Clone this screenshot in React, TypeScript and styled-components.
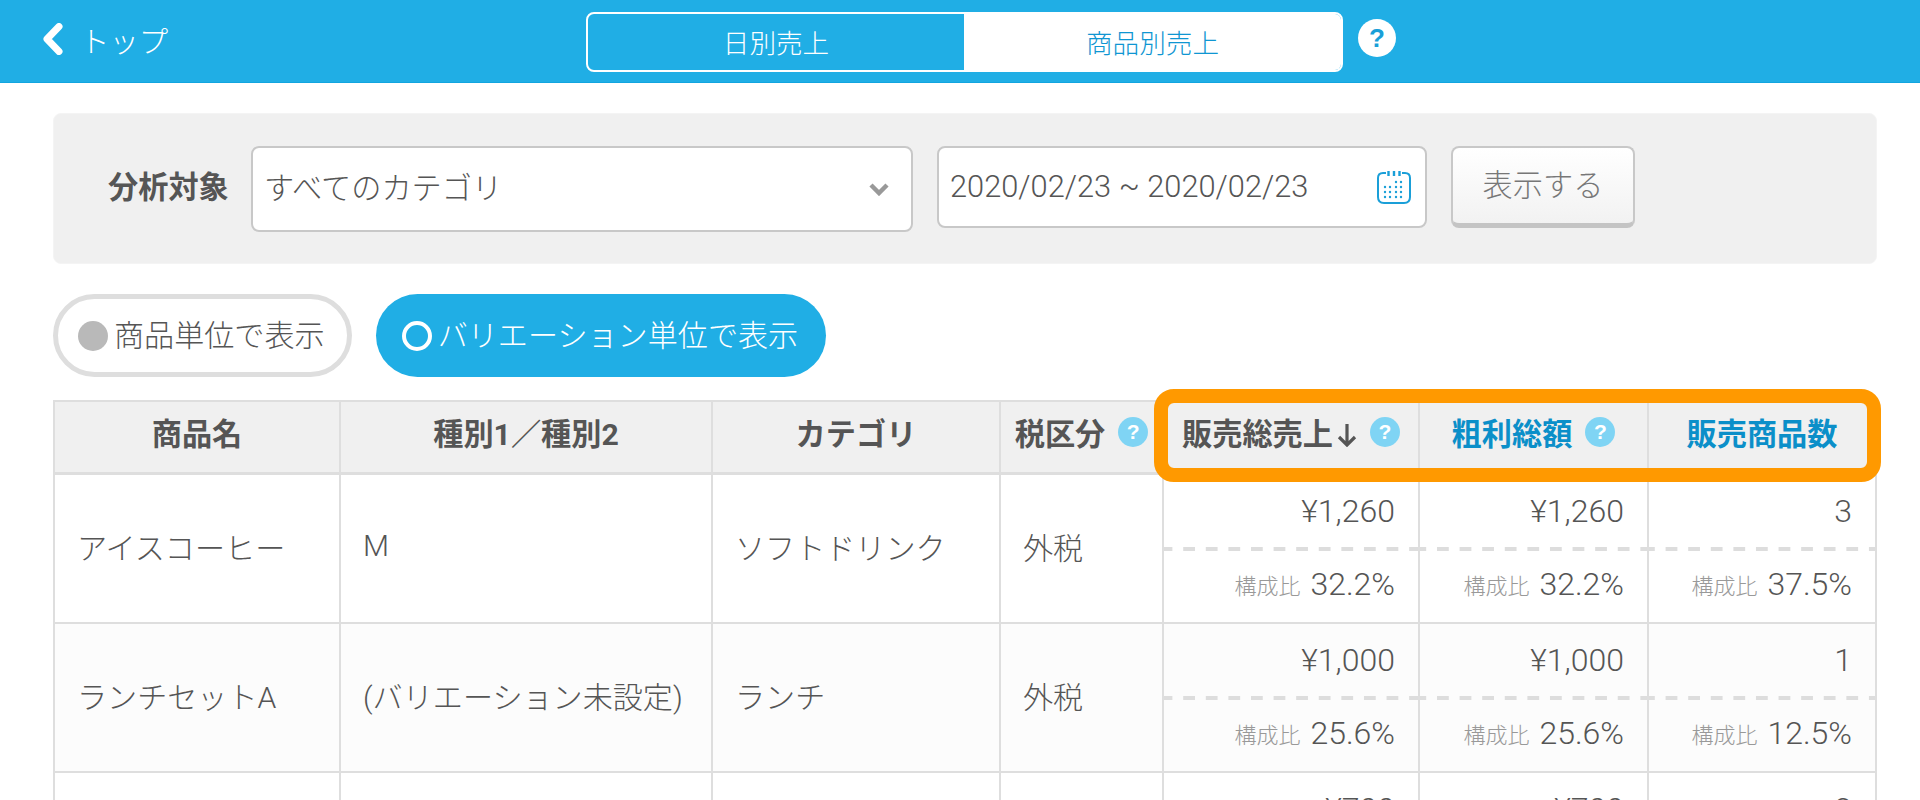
import React from "react";
import styled, { createGlobalStyle } from "styled-components";

const GlobalStyle = createGlobalStyle`
  html, body { margin: 0; padding: 0; height: 800px; overflow: hidden; background: #fff; }
  body {
    font-family: Roboto, "Noto Sans CJK JP", sans-serif;
    font-weight: 300;
    color: #555;
  }
  * { box-sizing: border-box; }
`;

const Header = styled.header`
  display: flex;
  align-items: flex-start;
  height: 83px;
  padding: 12px 0 0 43px;
  background: #20aee5;
  border-bottom: 1px solid #12a5df;
`;

const Back = styled.a`
  display: flex;
  align-items: center;
  gap: 17px;
  width: 543px;
  height: 54px;
  color: #fff;
  font-size: 29.4px;
`;

const Tabs = styled.div`
  display: grid;
  grid-template-columns: 376px 1fr;
  width: 757px;
  height: 60px;
  border: 2px solid #fff;
  border-radius: 8px;
  overflow: hidden;
`;

const Tab = styled.div<{ $active?: boolean }>`
  display: flex;
  align-items: center;
  justify-content: center;
  padding-bottom: 1px;
  font-size: 26.6px;
  color: ${(p) => (p.$active ? "#0f96d2" : "#fff")};
  background: ${(p) => (p.$active ? "#fff" : "transparent")};
`;

const HeaderHelp = styled.span`
  display: flex;
  align-items: center;
  justify-content: center;
  width: 38px;
  height: 38px;
  margin: 7px 0 0 15px;
  border-radius: 50%;
  background: #fff;
  color: #1a9fd8;
  font: 700 26px "Liberation Sans", sans-serif;
`;

const Main = styled.main`
  padding: 30px 43px 0 53px;
`;

const Panel = styled.section`
  display: flex;
  align-items: flex-start;
  height: 151px;
  padding: 32px 0 0 54px;
  background: #f0f0f0;
  border: 1px solid #f4f4f4;
  border-radius: 8px;
`;

const PanelLabel = styled.label`
  width: 143px;
  height: 86px;
  display: flex;
  align-items: center;
  padding-bottom: 8px;
  font-size: 30.2px;
  font-weight: 700;
  color: #555;
`;

const Field = styled.div<{ $width: number; $height: number; $padRight: number }>`
  display: flex;
  align-items: center;
  justify-content: space-between;
  width: ${(p) => p.$width}px;
  height: ${(p) => p.$height}px;
  margin-right: 24px;
  padding: 0 ${(p) => p.$padRight}px 0 11px;
  background: #fff;
  border: 2px solid #c8c8c8;
  border-radius: 8px;
  color: #555;
`;

const FieldText = styled.span<{ $nudge: number; $size: number }>`
  padding-bottom: ${(p) => p.$nudge}px;
  font-size: ${(p) => p.$size}px;
  white-space: nowrap;
`;

const ShowButton = styled.button`
  width: 184px;
  height: 82px;
  padding: 0 0 6px;
  background: linear-gradient(#ffffff, #f2f2f2);
  border: 2px solid #c8c8c8;
  border-bottom: 5px solid #c4c4c4;
  border-radius: 8px;
  font: inherit;
  font-size: 30.2px;
  color: #777;
`;

const Toggles = styled.div`
  display: flex;
  gap: 24px;
  margin-top: 30px;
`;

const Pill = styled.div<{ $on?: boolean }>`
  display: flex;
  align-items: center;
  gap: 6px;
  height: 83px;
  padding: 0 ${(p) => (p.$on ? 28 : 22)}px 6px ${(p) => (p.$on ? 26 : 20)}px;
  border-radius: 42px;
  font-size: 30.1px;
  white-space: nowrap;
  background: ${(p) => (p.$on ? "#20aee5" : "#fff")};
  border: ${(p) => (p.$on ? "none" : "5px solid #dedede")};
  color: ${(p) => (p.$on ? "#fff" : "#555")};
`;

const Radio = styled.span<{ $on?: boolean }>`
  flex: none;
  width: 30px;
  height: 30px;
  margin-top: 6px;
  border-radius: 50%;
  background: ${(p) => (p.$on ? "transparent" : "#b9b9b9")};
  border: ${(p) => (p.$on ? "4px solid #fff" : "none")};
`;

const TableWrap = styled.div`
  position: relative;
  margin-top: 23px;
  width: 1824px;
`;

const Table = styled.table`
  width: 1824px;
  table-layout: fixed;
  border-collapse: separate;
  border-spacing: 0;
  border-top: 2px solid #dedede;
  border-left: 2px solid #dedede;
`;

const HeadCell = styled.th<{ $link?: boolean }>`
  height: 73px;
  padding: 0;
  background: #f0f0f0;
  border-right: 2px solid #dedede;
  border-bottom: 3px solid #dedede;
  font-size: 30.2px;
  font-weight: 700;
  color: ${(p) => (p.$link ? "#0b8fc9" : "#555")};
`;

const HeadInner = styled.div`
  display: flex;
  align-items: center;
  justify-content: center;
  gap: 13px;
  padding-bottom: 10px;
  white-space: nowrap;
`;

const SortLabel = styled.span`
  display: flex;
  align-items: center;
  gap: 4px;
`;

const SortArrow = styled.svg`
  margin-top: 6px;
`;

const Help = styled.span`
  flex: none;
  display: inline-flex;
  align-items: center;
  justify-content: center;
  width: 30px;
  height: 30px;
  border-radius: 50%;
  background: #7fd4f4;
  color: #fff;
  font: 700 21px "Liberation Sans", sans-serif;
`;

const Row = styled.tr<{ $alt?: boolean }>`
  background: ${(p) => (p.$alt ? "#fcfcfc" : "#fff")};
`;

const TextCell = styled.td`
  height: 149px;
  padding: 0 0 6px 22px;
  border-right: 2px solid #dedede;
  border-bottom: 2px solid #dedede;
  font-size: 30.1px;
  color: #555;
  white-space: nowrap;
`;

const MetricCell = styled.td`
  height: 149px;
  padding: 0;
  border-right: 2px solid #dedede;
  border-bottom: 2px solid #dedede;
  vertical-align: top;
`;

const MetricLine = styled.div<{ $height: number; $lift: number }>`
  display: flex;
  align-items: center;
  justify-content: flex-end;
  gap: 10px;
  height: ${(p) => p.$height}px;
  padding: 0 23px ${(p) => p.$lift}px 0;
  font-size: 32px;
  white-space: nowrap;
`;

const DashedRule = styled.div<{ $phase: number }>`
  height: 4px;
  background-image: linear-gradient(90deg, #dddddd 0 11.6px, transparent 11.6px);
  background-size: 22.6px 100%;
  background-position-x: ${(p) => p.$phase}px;
`;

const Ratio = styled.span`
  font-size: 22px;
  color: #999;
`;

const Highlight = styled.div`
  position: absolute;
  left: 1101px;
  top: -11px;
  width: 727px;
  height: 93px;
  border: 14px solid #ff9900;
  border-radius: 20px;
  pointer-events: none;
`;

const rows = [
  { name: "アイスコーヒー", variation: "M", category: "ソフトドリンク", tax: "外税", sales: "¥1,260", salesRatio: "32.2%", profit: "¥1,260", profitRatio: "32.2%", count: "3", countRatio: "37.5%" },
  { name: "ランチセットA", variation: "(バリエーション未設定)", category: "ランチ", tax: "外税", sales: "¥1,000", salesRatio: "25.6%", profit: "¥1,000", profitRatio: "25.6%", count: "1", countRatio: "12.5%" },
  { name: "", variation: "", category: "", tax: "", sales: "¥700", salesRatio: "", profit: "¥700", profitRatio: "", count: "2", countRatio: "" },
];

const widths = [286, 372, 288, 163, 256, 229, 228];

function Metric({ value, ratio, phase }: { value: string; ratio: string; phase: number }) {
  return (
    <MetricCell>
      <MetricLine $height={72} $lift={1}>{value}</MetricLine>
      <DashedRule $phase={phase} />
      <MetricLine $height={71} $lift={5}>
        {ratio && <Ratio>構成比</Ratio>}
        {ratio}
      </MetricLine>
    </MetricCell>
  );
}

export default function App() {
  return (
    <>
      <GlobalStyle />
      <Header>
        <Back>
          <svg width="20" height="32" viewBox="0 0 20 32" fill="none">
            <path d="M16 3.5 L4 16 L16 28.5" stroke="#fff" strokeWidth="7" strokeLinecap="round" strokeLinejoin="round" />
          </svg>
          トップ
        </Back>
        <Tabs>
          <Tab>日別売上</Tab>
          <Tab $active>商品別売上</Tab>
        </Tabs>
        <HeaderHelp>?</HeaderHelp>
      </Header>
      <Main>
        <Panel>
          <PanelLabel>分析対象</PanelLabel>
          <Field $width={662} $height={86} $padRight={22}>
            <FieldText $nudge={7} $size={30.2}>すべてのカテゴリ</FieldText>
            <svg width="20" height="13" viewBox="0 0 20 13" fill="none">
              <path d="M2 2 L10 10 L18 2" stroke="#999" strokeWidth="4.5" />
            </svg>
          </Field>
          <Field $width={490} $height={82} $padRight={14}>
            <FieldText $nudge={2} $size={30.8}>2020/02/23 ~ 2020/02/23</FieldText>
            <svg width="34" height="33" viewBox="0 0 34 33" fill="none">
              <path d="M9 2 H6 Q1 2 1 7 V26 Q1 32 7 32 H27 Q33 32 33 26 V7 Q33 2 28 2 H25" stroke="#1a9fd8" strokeWidth="2" />
              <path d="M11.5 0 V5 M17 0 V5 M22.5 0 V5" stroke="#1a9fd8" strokeWidth="2.4" />
              <g fill="#1a9fd8">
                {[
                  [19, 11], [24, 11],
                  [8, 16], [13, 16], [19, 16], [24, 16],
                  [8, 21], [13, 21], [19, 21], [24, 21],
                  [8, 26], [13, 26], [19, 26], [24, 26],
                ].map(([cx, cy]) => (
                  <circle key={`${cx}-${cy}`} cx={cx} cy={cy} r="1.2" />
                ))}
              </g>
            </svg>
          </Field>
          <ShowButton>表示する</ShowButton>
        </Panel>
        <Toggles>
          <Pill>
            <Radio />
            商品単位で表示
          </Pill>
          <Pill $on>
            <Radio $on />
            バリエーション単位で表示
          </Pill>
        </Toggles>
        <TableWrap>
          <Table>
            <colgroup>
              {widths.map((w, i) => (
                <col key={i} style={{ width: w }} />
              ))}
            </colgroup>
            <thead>
              <tr>
                <HeadCell><HeadInner>商品名</HeadInner></HeadCell>
                <HeadCell><HeadInner>種別1／種別2</HeadInner></HeadCell>
                <HeadCell><HeadInner>カテゴリ</HeadInner></HeadCell>
                <HeadCell><HeadInner>税区分<Help>?</Help></HeadInner></HeadCell>
                <HeadCell>
                  <HeadInner>
                    <SortLabel>
                      販売総売上
                      <SortArrow width="20" height="24" viewBox="0 0 20 24" fill="none">
                        <path d="M10 1 V22 M2 14 L10 22 L18 14" stroke="#555" strokeWidth="3.2" />
                      </SortArrow>
                    </SortLabel>
                    <Help>?</Help>
                  </HeadInner>
                </HeadCell>
                <HeadCell $link><HeadInner>粗利総額<Help>?</Help></HeadInner></HeadCell>
                <HeadCell $link><HeadInner>販売商品数</HeadInner></HeadCell>
              </tr>
            </thead>
            <tbody>
              {rows.map((r, i) => (
                <Row key={i} $alt={i % 2 === 1}>
                  <TextCell>{r.name}</TextCell>
                  <TextCell>{r.variation}</TextCell>
                  <TextCell>{r.category}</TextCell>
                  <TextCell>{r.tax}</TextCell>
                  <Metric value={r.sales} ratio={r.salesRatio} phase={-3.4} />
                  <Metric value={r.profit} ratio={r.profitRatio} phase={-5.6} />
                  <Metric value={r.count} ratio={r.countRatio} phase={-6} />
                </Row>
              ))}
            </tbody>
          </Table>
          <Highlight />
        </TableWrap>
      </Main>
    </>
  );
}
